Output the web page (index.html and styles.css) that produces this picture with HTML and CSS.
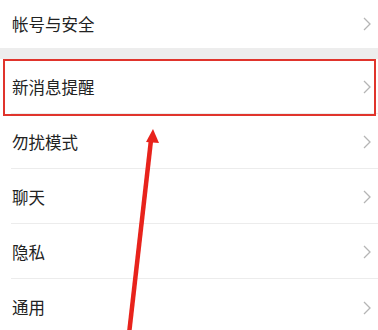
FILE: index.html
```html
<!DOCTYPE html>
<html lang="zh-CN">
<head>
    <meta charset="UTF-8">
    <meta name="viewport" content="width=device-width, initial-scale=1.0">
    <title>设置</title>
    <link rel="stylesheet" href="styles.css">
</head>
<body>
    <div class="group group-top">
        <div class="row row-short">
            <span class="label">帐号与安全</span>
            <svg class="chevron" viewBox="0 0 8 14"><polyline points="1,1 7,7 1,13"/></svg>
        </div>
    </div>

    <div class="group">
        <!-- highlighted row -->
        <div class="row marked">
            <span class="label">新消息提醒</span>
            <svg class="chevron" viewBox="0 0 8 14"><polyline points="1,1 7,7 1,13"/></svg>
        </div>
        <div class="row">
            <span class="label">勿扰模式</span>
            <svg class="chevron" viewBox="0 0 8 14"><polyline points="1,1 7,7 1,13"/></svg>
        </div>
        <div class="row">
            <span class="label">聊天</span>
            <svg class="chevron" viewBox="0 0 8 14"><polyline points="1,1 7,7 1,13"/></svg>
        </div>
        <div class="row">
            <span class="label">隐私</span>
            <svg class="chevron" viewBox="0 0 8 14"><polyline points="1,1 7,7 1,13"/></svg>
        </div>
        <div class="row">
            <span class="label">通用</span>
            <svg class="chevron" viewBox="0 0 8 14"><polyline points="1,1 7,7 1,13"/></svg>
        </div>
    </div>

    <!-- annotation arrow drawn over the list -->
    <svg class="arrow" viewBox="0 0 378 330">
        <line x1="129" y1="334" x2="151" y2="140"/>
        <polygon points="153,129 159,143 146,142"/>
    </svg>
</body>
</html>
```

FILE: styles.css
```css
* {
    box-sizing: border-box;
}
body {
    margin: 0;
    padding: 0;
    width: 378px;
    height: 330px;
    overflow: hidden;
    position: relative;
    background: #ededed;
    font-family: "Noto Sans CJK SC", "Noto Sans", sans-serif;
    color: #222;
}
.group {
    background: #fff;
}
.group-top {
    margin-bottom: 11px;
}
.row {
    position: relative;
    display: flex;
    align-items: center;
    justify-content: space-between;
    height: 55px;
    margin-left: 11px;
    padding: 2px 7px 0 1px;
    border-bottom: 1px solid #ececec;
}
.row:last-child {
    border-bottom: none;
}
.row-short {
    height: 48px;
    padding-top: 0;
    border-bottom: none;
}
.label {
    font-size: 16.5px;
    line-height: 1;
}
.chevron {
    width: 8px;
    height: 14px;
    fill: none;
    stroke: #b5b5b5;
    stroke-width: 1.3;
}
/* red frame around the highlighted row */
.marked::after {
    content: "";
    position: absolute;
    left: -8px;
    right: 2px;
    top: 0;
    bottom: -3px;
    border: 2px solid #e0342c;
    pointer-events: none;
}
.arrow {
    position: absolute;
    left: 0;
    top: 0;
    width: 378px;
    height: 330px;
}
.arrow line {
    stroke: #e8231c;
    stroke-width: 4.5;
}
.arrow polygon {
    fill: #e8231c;
}
```
